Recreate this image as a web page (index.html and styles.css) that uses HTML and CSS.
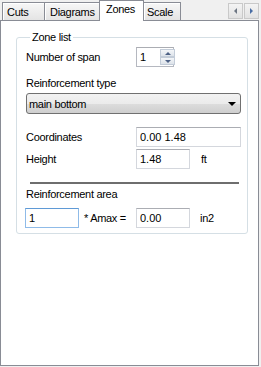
FILE: index.html
```html
<!DOCTYPE html>
<html lang="en">
<head>
    <meta charset="UTF-8">
    <title>Zones</title>
    <link rel="stylesheet" href="styles.css">
</head>
<body>
    <div class="tabbar">
        <div class="tabs">
            <div class="tab tab-cuts">Cuts</div>
            <div class="tab tab-diagrams">Diagrams</div>
            <div class="tab tab-zones active">Zones</div>
            <div class="tab tab-scale">Scale</div>
        </div>
        <div class="scroller">
            <div class="scroll-btn"><span class="arrow-left"></span></div>
            <div class="scroll-btn"><span class="arrow-right"></span></div>
        </div>
    </div>

    <div class="panel">
        <fieldset class="group">
            <legend>Zone list</legend>

            <div class="row row-spin">
                <span class="label">Number of span</span>
                <div class="spin">
                    <input class="spin-value" type="text" value="1">
                    <div class="spin-btns">
                        <div class="spin-btn"><span class="arrow-up"></span></div>
                        <div class="spin-btn"><span class="arrow-down"></span></div>
                    </div>
                </div>
            </div>

            <div class="caption caption-type">Reinforcement type</div>
            <div class="combo">
                <span>main bottom</span>
                <span class="arrow-combo"></span>
            </div>

            <div class="row row-coords">
                <span class="label">Coordinates</span>
                <input class="field field-wide" type="text" value="0.00 1.48">
            </div>
            <div class="row row-height">
                <span class="label">Height</span>
                <input class="field" type="text" value="1.48">
                <span class="unit">ft</span>
            </div>

            <div class="separator"></div>

            <div class="caption caption-area">Reinforcement area</div>
            <div class="row row-area">
                <input class="field field-focus" type="text" value="1">
                <span class="mult">* Amax =</span>
                <input class="field" type="text" value="0.00">
                <span class="unit unit-area">in2</span>
            </div>
        </fieldset>
    </div>
</body>
</html>
```

FILE: styles.css
```css
body { margin: 0; background: #f0f0f0; font-family: "Liberation Sans", Arial, sans-serif; font-size: 11px; letter-spacing: -0.3px; color: #000; width: 261px; height: 367px; overflow: hidden; }

.tabbar { display: flex; justify-content: space-between; height: 20px; }
.tabs { display: flex; align-items: flex-end; padding-left: 2px; }
.tab { box-sizing: border-box; height: 18px; padding: 2px 0 0 5px; line-height: 14px; border: 1px solid #898c95; border-bottom: none; border-right: none; background: linear-gradient(#f7f7f7, #e4e4e4); box-shadow: inset 1px 1px 0 #fff; }
.tab-cuts { width: 42px; padding-left: 4px; }
.tab-diagrams { width: 55px; }
.tab-zones { width: 45px; padding: 1px 0 0 6px; }
.tab-scale { width: 37px; padding-left: 3px; border-right: 1px solid #898c95; }
.tab.active { height: 21px; margin-bottom: -1px; position: relative; z-index: 1; background: #fff; box-shadow: none; border-right: 1px solid #898c95; }
.tab.active + .tab { border-left: none; }

.scroller { display: flex; gap: 1px; padding: 3px 2px 0 0; }
.scroll-btn { box-sizing: border-box; width: 15px; height: 16px; border: 1px solid #c9c9c9; background: linear-gradient(#f4f4f4, #e2e2e2); display: flex; align-items: center; justify-content: center; }
.arrow-left { width: 0; height: 0; border-top: 3px solid transparent; border-bottom: 3px solid transparent; border-right: 3px solid #6d7683; }
.arrow-right { width: 0; height: 0; border-top: 3px solid transparent; border-bottom: 3px solid transparent; border-left: 3px solid #4a6ea5; }

.panel { box-sizing: border-box; width: 259px; height: 346px; border: 1px solid #898c95; background: #fff; padding: 9px 10px 0 15px; }

.group { margin: 0; padding: 0 6px 5px 9px; border: 1px solid #d5dfe5; border-radius: 3px; }
.group legend { padding: 0 2px; margin-left: 4px; line-height: 14px; }

.row { display: flex; align-items: center; height: 20px; }
.label { width: 110px; }
.row-spin { margin-top: 3px; }
.row-coords { margin-top: 13px; }
.row-height { margin-top: 2px; }
.row-area { margin-top: 7px; margin-left: -1px; }

.caption { line-height: 13px; }
.caption-type { margin-top: 10px; }
.caption-area { margin-top: 4px; }

.spin { box-sizing: border-box; display: flex; width: 38px; height: 20px; border: 1px solid #b5b8c0; border-top-color: #abadb3; background: #fff; }
.spin-value { width: 20px; border: none; padding: 0 0 0 3px; font: inherit; outline: none; }
.spin-btns { display: flex; flex-direction: column; gap: 0; padding: 1px 1px 1px 0; }
.spin-btn { box-sizing: border-box; width: 15px; height: 8px; border: 1px solid #c3ccd8; background: linear-gradient(#f4f6f9, #dde3ea); display: flex; align-items: center; justify-content: center; }
.arrow-up { width: 0; height: 0; border-left: 3px solid transparent; border-right: 3px solid transparent; border-bottom: 3px solid #4d6185; }
.arrow-down { width: 0; height: 0; border-left: 3px solid transparent; border-right: 3px solid transparent; border-top: 3px solid #4d6185; }

.combo { box-sizing: border-box; display: flex; align-items: center; justify-content: space-between; height: 21px; margin-top: 3px; padding: 0 4px 0 2px; border: 1px solid #707070; border-radius: 3px; background: linear-gradient(#f2f2f2 0%, #ebebeb 50%, #dddddd 51%, #cfcfcf 100%); }
.arrow-combo { width: 0; height: 0; border-left: 4px solid transparent; border-right: 4px solid transparent; border-top: 4px solid #000; }

.field { box-sizing: border-box; width: 54px; height: 20px; padding: 0 0 0 3px; font: inherit; border: 1px solid #d4d7dd; border-top-color: #abadb3; background: #fff; outline: none; }
.field-wide { width: 105px; }
.field-focus { border-color: #8fbbe8; border-top-color: #5f9ad6; }
.unit { margin-left: 11px; }
.unit-area { margin-left: 10px; }
.mult { width: 57px; padding-left: 5px; box-sizing: border-box; }

.separator { height: 2px; background: #6e6e6e; margin: 13px 2px 0 4px; }
```
